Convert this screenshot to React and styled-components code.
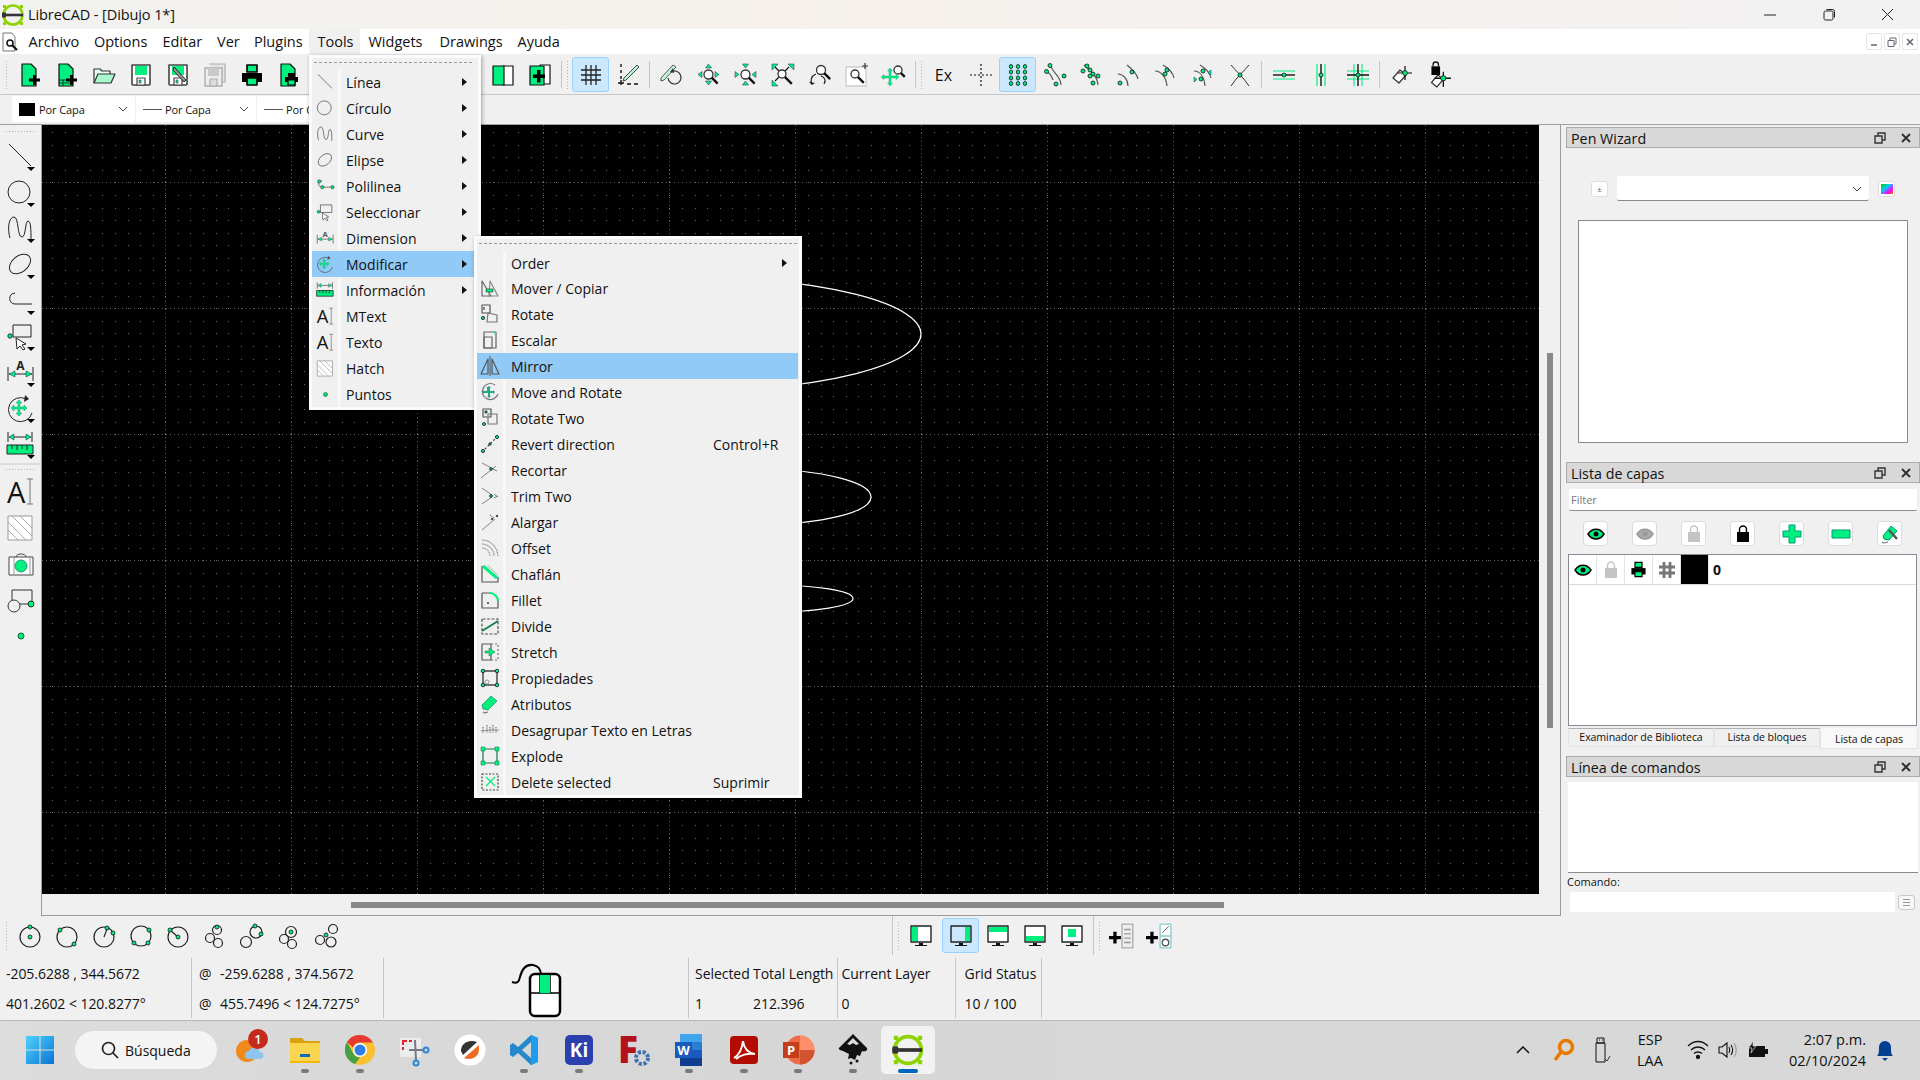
import React, { useMemo } from 'react'
import styled, { createGlobalStyle } from 'styled-components'

const G = '#00f080'
const FONT = '"Open Sans", "Noto Sans", "Liberation Sans", sans-serif'

const GlobalStyle = createGlobalStyle`
  html, body { margin: 0; padding: 0; background: #f0f0f0; }
  body { font-family: ${FONT}; font-size: 14px; color: #111; overflow: hidden; }
  * { box-sizing: border-box; }
`

const Root = styled.div`
  position: relative;
  width: 1920px;
  height: 1080px;
  overflow: hidden;
  display: flex;
  flex-direction: column;
  background: #f0f0f0;
`

/* ---------- title + menu ---------- */
const TitleBar = styled.div`
  height: 29px;
  display: flex;
  align-items: center;
  background: linear-gradient(90deg, #f2f2f0, #f6f1ec 40%, #f4f0ee 70%, #f2f2f2);
`
const TitleLogo = styled.div`
  margin-left: 1px;
  width: 24px;
  height: 24px;
`
const TitleText = styled.span`
  margin-left: 3px;
  font-size: 14.5px;
  letter-spacing: -0.1px;
`
const WinButtons = styled.div`
  margin-left: auto;
  padding-right: 4px;
  display: flex;
`
const WinButton = styled.div`
  width: 58px;
  height: 29px;
  display: flex;
  align-items: center;
  justify-content: center;
`
const MenuBar = styled.div`
  height: 26px;
  background: #fff;
  display: flex;
  align-items: center;
  border-bottom: 1px solid #f0f0f0;
`
const MenuGlyph = styled.svg`
  width: 20px;
  height: 22px;
  margin: 0 0 0 2px;
`
const MenuEntry = styled.div`
  flex: none;
  width: ${p => p.$w}px;
  height: 26px;
  padding-left: ${p => p.$pad || 8}px;
  display: flex;
  align-items: center;
  font-size: 14.5px;
  background: ${p => (p.$open ? '#f0f0f0' : 'transparent')};
`
const MdiButtons = styled.div`
  margin-left: auto;
  margin-right: 2px;
  display: flex;
  gap: 2px;
`
const MdiButton = styled.div`
  width: 16px;
  height: 17px;
  border: 1px solid #e4e4e4;
  border-radius: 2px;
  display: flex;
  align-items: center;
  justify-content: center;
`

/* ---------- toolbars ---------- */
const ToolRow = styled.div`
  height: 40px;
  display: flex;
  align-items: center;
  padding-left: 4px;
  border-bottom: 1px solid #c8c8c8;
`
const Grip = styled.div`
  flex: none;
  width: ${p => p.$w || 7}px;
  align-self: stretch;
  margin: 5px 0;
  background-image: radial-gradient(circle, #b4b4b4 0.8px, transparent 1px);
  background-size: 3px 3px;
  background-repeat: repeat-y;
  background-position: 1px 0;
`
const Sep = styled.div`
  flex: none;
  width: 7px;
  align-self: stretch;
  margin: ${p => (p.$full ? 0 : 6)}px 0;
  background: linear-gradient(#c4c4c4, #c4c4c4) 3px 0 / 1px 100% no-repeat;
`
const Spacer = styled.div`
  flex: none;
  width: ${p => p.$w}px;
`
const Tool = styled.div`
  flex: none;
  width: ${p => p.$w || 37}px;
  height: 35px;
  padding-right: ${p => p.$pr || 0}px;
  display: flex;
  align-items: center;
  justify-content: center;
  border: 1px solid ${p => (p.$on ? '#99d1ff' : 'transparent')};
  border-radius: 3px;
  background: ${p => (p.$on ? '#cce8ff' : 'transparent')};
  font-size: 16px;
`
const ComboRow = styled.div`
  height: 30px;
  display: flex;
  align-items: center;
  padding: 0 0 1px 12px;
  gap: 1px;
  border-bottom: 1px solid #a0a0a8;
`
const Combo = styled.div`
  width: ${p => p.$w}px;
  height: 26px;
  background: #fff;
  border-radius: 2px;
  display: flex;
  align-items: center;
  padding-left: 7px;
  position: relative;
  font-size: 11px;
  letter-spacing: -0.1px;
  white-space: nowrap;
`
const Swatch = styled.div`
  width: 16px;
  height: 13px;
  background: #000;
  margin-right: 4px;
`
const PenLine = styled.div`
  width: 19px;
  height: 1px;
  background: #555;
  margin-right: 3px;
`
const Chev = styled.svg`
  position: absolute;
  right: 7px;
  top: 9px;
  width: 10px;
  height: 8px;
`

/* ---------- workspace ---------- */
const Workspace = styled.div`
  flex: none;
  height: 791px;
  display: flex;
`
const SideBar = styled.div`
  flex: none;
  width: 41px;
  display: flex;
  flex-direction: column;
  align-items: stretch;
`
const SideGrip = styled.div`
  height: ${p => p.$h || 14}px;
  margin: 0 5px;
  background-image: radial-gradient(circle, #b0b0b0 0.8px, transparent 1px);
  background-size: 3px 3px;
  background-repeat: repeat-x;
  background-position: 0 ${p => p.$y || 5}px;
`
const SideTool = styled.div`
  height: 36px;
  display: flex;
  align-items: center;
  justify-content: center;
  color: #222;
`
const SideDivider = styled.div`
  height: 2px;
  background: #ddd;
`
const CanvasFrame = styled.div`
  flex: none;
  width: 1520px;
  height: 791px;
  border: 1px solid #9a9aa2;
  border-top: none;
  display: grid;
  grid-template-columns: 1497px 1fr;
  grid-template-rows: 769px 1fr;
`
const CanvasSvg = styled.svg`
  display: block;
  background: #000;
  width: 1497px;
  height: 769px;
`
const VScroll = styled.div`
  padding: 228px 0 0 8px;
`
const VThumb = styled.div`
  width: 6px;
  height: 375px;
  background: #888;
`
const HScroll = styled.div`
  grid-column: 1 / span 2;
  padding: 8px 0 0 309px;
`
const HThumb = styled.div`
  width: 873px;
  height: 6px;
  background: #888;
`

/* ---------- docks ---------- */
const Dock = styled.div`
  flex: none;
  width: 359px;
  padding: 2px 0 0 5px;
  display: flex;
  flex-direction: column;
`
const DockTitle = styled.div`
  flex: none;
  height: 21px;
  width: 354px;
  background: #d8d8d8;
  border: 1px solid #acacac;
  display: flex;
  align-items: center;
  padding: 1px 0 0 4px;
  font-size: 14.3px;
`
const DockIcons = styled.div`
  margin-left: auto;
  display: flex;
  gap: 14px;
  padding: 0 7px 1px 0;
  align-items: center;
`
const WizardBody = styled.div`
  flex: none;
  height: 314px;
  padding: 28px 0 0 25px;
`
const WizardRow = styled.div`
  display: flex;
  align-items: center;
  height: 25px;
`
const SmallBtn = styled.div`
  width: 17px;
  height: 16px;
  background: #fff;
  border: 1px solid #dcdcdc;
  border-radius: 3px;
  display: flex;
  align-items: center;
  justify-content: center;
  font-size: 8px;
  color: #666;
`
const WizardCombo = styled.div`
  position: relative;
  width: 252px;
  height: 25px;
  margin: 0 9px;
  background: #fff;
  border-bottom: 1px solid #8a8a8a;
  border-radius: 2px;
`
const WizardList = styled.div`
  width: 330px;
  height: 223px;
  margin: 19px 0 0 -13px;
  background: #fff;
  border: 1px solid #8a8a94;
`
const LayersBody = styled.div`
  flex: none;
  height: 273px;
  padding-top: 6px;
`
const FilterInput = styled.div`
  height: 22px;
  width: 348px;
  margin-left: 3px;
  background: #fff;
  border-bottom: 1px solid #8a8a8a;
  border-radius: 2px;
  padding-left: 2px;
  font-size: 11px;
  line-height: 22px;
  color: #777;
`
const LayerTools = styled.div`
  display: flex;
  gap: 24px;
  padding: 10px 0 0 17px;
`
const LayerBtn = styled.div`
  width: 25px;
  height: 25px;
  background: #fff;
  border: 1px solid #dcdcdc;
  border-radius: 4px;
  display: flex;
  align-items: center;
  justify-content: center;
`
const LayerTable = styled.div`
  width: 349px;
  height: 172px;
  margin: 8px 0 0 2px;
  background: #fff;
  border: 1px solid #8a8a94;
`
const LayerRow = styled.div`
  display: flex;
  height: 30px;
  border-bottom: 1px solid #d8d8d8;
`
const LayerCell = styled.div`
  width: 28px;
  display: flex;
  align-items: center;
  justify-content: center;
  border-right: 1px solid #e4e4e4;
  background: ${p => p.$bg || 'transparent'};
`
const LayerName = styled.div`
  padding-left: 4px;
  line-height: 29px;
  font-weight: 700;
  font-size: 14px;
`
const TabRow = styled.div`
  display: flex;
  margin: 2px 0 0 2px;
`
const TabItem = styled.div`
  width: ${p => p.$w}px;
  height: ${p => (p.$on ? 21 : 19)}px;
  background: ${p => (p.$on ? '#f8f8f8' : '#f0f0f0')};
  border: 1px solid #e4e4e4;
  border-top: ${p => (p.$on ? 'none' : '1px solid #b0b0b0')};
  font-size: 10.6px;
  letter-spacing: -0.1px;
  text-align: center;
  line-height: ${p => (p.$on ? 23 : 16)}px;
`
const CommandBody = styled.div`
  flex: none;
  padding: 5px 0 0 2px;
`
const CommandOutput = styled.div`
  width: 350px;
  height: 91px;
  background: #fff;
  border-bottom: 1px solid #8a8a8a;
`
const CommandLabel = styled.div`
  height: 18px;
  font-size: 11px;
  line-height: 18px;
  margin-left: -1px;
`
const CommandRow = styled.div`
  display: flex;
  align-items: center;
  padding: 1px 0 0 2px;
`
const CommandInput = styled.div`
  width: 325px;
  height: 20px;
  background: #fff;
`
const CommandBtn = styled.div`
  width: 17px;
  height: 15px;
  margin-left: 3px;
  border: 1px solid #c8c8c8;
  border-radius: 3px;
  background: #f8f8f8;
  display: flex;
  align-items: center;
  justify-content: center;
`

/* ---------- bottom bars ---------- */
const BottomTools = styled.div`
  flex: none;
  height: 39px;
  padding-left: 4px;
  display: flex;
  align-items: center;
`
const StatusBar = styled.div`
  flex: none;
  height: 65px;
  display: flex;
  padding-top: 3px;
  font-size: 14px;
  letter-spacing: -0.05px;
`
const StatusField = styled.div`
  flex: none;
  width: ${p => p.$w}px;
  height: 60px;
  padding-left: ${p => p.$pad || 0}px;
  border-right: 1px solid #c6c6c6;
  display: grid;
  grid-template-columns: ${p => p.$cols || '1fr'};
  grid-auto-rows: 30px;
  align-items: center;
  white-space: nowrap;
`
const MouseCell = styled.div`
  width: 305px;
  height: 60px;
  border-right: 1px solid #c6c6c6;
  display: flex;
  justify-content: center;
  padding: 2px 0 0 5px;
`
const TaskBar = styled.div`
  flex: none;
  height: 60px;
  display: flex;
  align-items: center;
  padding: 0 0 1px 18px;
  background: linear-gradient(90deg, #dcdcdc, #d6d6d6 40%, #d8d8d8);
  border-top: 1px solid #b8b8b8;
`
const WinStart = styled.div`
  width: 44px;
  display: flex;
  justify-content: center;
`
const SearchPill = styled.div`
  width: 142px;
  height: 38px;
  margin: 0 6px 0 13px;
  background: #f4f4f4;
  border-radius: 19px;
  display: flex;
  align-items: center;
  padding-left: 26px;
  gap: 6px;
  font-size: 14px;
`
const AppSlot = styled.div`
  position: relative;
  width: 54.8px;
  height: 48px;
  display: flex;
  align-items: center;
  justify-content: center;
  border-radius: 5px;
  background: ${p => (p.$active ? '#f2f2f2' : 'transparent')};
  &::after {
    content: ${p => (p.$open ? '""' : 'none')};
    position: absolute;
    left: 50%;
    bottom: 1px;
    transform: translateX(-50%);
    width: ${p => (p.$active ? 20 : 8)}px;
    height: 4px;
    border-radius: 2px;
    background: ${p => (p.$active ? '#0067c0' : '#7a7a7a')};
  }
`
const Badge = styled.div`
  position: absolute;
  top: 3px;
  left: 25px;
  width: 20px;
  height: 20px;
  border-radius: 50%;
  background: #c42b1c;
  color: #fff;
  font-size: 13px;
  font-weight: 600;
  line-height: 20px;
  text-align: center;
`
const Tray = styled.div`
  margin-left: auto;
  padding-right: 16px;
  display: flex;
  align-items: center;
`
const TrayItem = styled.div`
  width: ${p => p.$w}px;
  display: flex;
  flex-direction: column;
  align-items: ${p => p.$align || 'center'};
  justify-content: center;
  font-size: 14.5px;
  line-height: 21px;
  white-space: nowrap;
`

/* ---------- popup menus ---------- */
const Popup = styled.div`
  position: absolute;
  left: ${p => p.$x}px;
  top: ${p => p.$y}px;
  width: ${p => p.$w}px;
  background: #f0f0f0;
  border: 3px solid #fbfbfb;
  padding-right: ${p => p.$pr}px;
  box-shadow: 1px 1px 4px rgba(0, 0, 0, 0.35);
`
const TearOff = styled.div`
  height: ${p => p.$h}px;
  margin-left: 2px;
  background: repeating-linear-gradient(90deg, #9a9a9a 0 3px, transparent 3px 5px) 0 4px / 100% 1px no-repeat;
`
const PopupRow = styled.div`
  display: flex;
  align-items: center;
  height: ${p => p.$h || 26}px;
  background: ${p => (p.$active ? '#91c9f7' : 'transparent')};
  font-size: 14px;
  letter-spacing: 0.02px;
`
const PopupIcon = styled.div`
  flex: none;
  width: ${p => p.$w}px;
  height: 100%;
  display: flex;
  align-items: center;
  justify-content: center;
  color: #555;
  border-right: 3px solid ${p => (p.$active ? 'transparent' : '#f8f8f8')};
`
const PopupLabel = styled.div`
  padding-left: 5px;
  flex: 1;
`
const Shortcut = styled.div`
  width: 85px;
`
const SubArrow = styled.div`
  width: 0;
  height: 0;
  margin-right: ${p => p.$mr}px;
  border-left: 5px solid #111;
  border-top: 4px solid transparent;
  border-bottom: 4px solid transparent;
`

/* ---------- icons ---------- */
const Ic = ({ s = 24, children, vb, w = 1.2 }) => (
  <svg width={s} height={s} viewBox={vb || '0 0 24 24'} fill="none" stroke="#111" strokeWidth={w} strokeLinejoin="round" overflow="visible">
    {children}
  </svg>
)

const plus = <path d="M15 12h3v3.5h4v3h-4V22h-3v-3.5h-4v-3h4z" fill="#000" stroke="none" />
const floppy = (fill) => (
  <>
    <path d="M3 2h18v19a1 1 0 0 1-1 1H4a1 1 0 0 1-1-1z" fill="#fff" stroke="#444" strokeWidth="1.6" />
    <path d="M6 3h12v9H6z" fill={fill} stroke="none" />
    <path d="M8 15h8v7H8z" fill="#fff" stroke="#444" />
    <path d="M10 17h2v3h-2z" fill={fill} stroke="#444" strokeWidth=".6" />
  </>
)
const magnifier = (cx, cy, r = 4.5, hx = 6) => (
  <>
    <circle cx={cx} cy={cy} r={r} fill="#fff" stroke="#333" strokeWidth="1.3" />
    <path d={`M${cx + r * 0.7} ${cy + r * 0.7}l${hx} ${hx}`} stroke="#111" strokeWidth="2.4" />
  </>
)
const tri = (d) => <path d={d} fill={G} stroke="#226" strokeWidth=".5" />
const node = (x, y, r = 2) => <circle cx={x} cy={y} r={r} fill={G} stroke="#111" strokeWidth=".8" />

const I = {
  fileNew: (
    <>
      <path d="M4 1h9l5 5v17H4z" fill={G} stroke="#111" />
      {plus}
    </>
  ),
  fileTpl: (
    <>
      <path d="M4 1h9l5 5v17H4z" fill={G} stroke="#111" />
      <path d="M4 17h11M4 20h11M8 17v6" stroke="#111" strokeWidth=".8" />
      {plus}
    </>
  ),
  open: (
    <>
      <path d="M2 20V6h6l2 2h8v3" fill="#e8fff2" stroke="#333" />
      <path d="M2 20l4-9h17l-4 9z" fill="#a8f8cc" stroke="#333" />
    </>
  ),
  save: floppy(G),
  saveAs: (
    <>
      {floppy(G)}
      <path d="M8 4l12 13-2 2L7 7z" fill="#999" stroke="#111" strokeWidth=".9" />
    </>
  ),
  saveAll: (
    <g opacity=".55">
      <path d="M6 1h16v18h-3" fill="#ddd" stroke="#777" />
      <path d="M2 5h17v18H2z" fill="#eee" stroke="#777" strokeWidth="1.4" />
      <path d="M5 5h11v8H5z" fill="#aaa" stroke="none" />
      <path d="M7 16h7v7H7z" fill="#ccc" stroke="#777" />
    </g>
  ),
  print: (
    <>
      <path d="M7 2h10v7H7z" fill={G} stroke="#000" strokeWidth="1.6" />
      <path d="M2 10h20v9H2z" fill="#000" stroke="none" />
      <path d="M7 15h10v7H7z" fill={G} stroke="#000" strokeWidth="1.6" />
    </>
  ),
  preview: (
    <>
      <path d="M4 1h9l5 5v17H4z" fill={G} stroke="#111" />
      <path d="M11 10h7v4h-7zM8 14h13v5H8z" fill="#000" stroke="none" />
      <path d="M11 17h7v5h-7z" fill={G} stroke="#000" />
    </>
  ),
  doc2: (
    <>
      <path d="M12 3h10v19H12z" fill="#fff" stroke="#111" />
      <path d="M2 3h11v19H2z" fill={G} stroke="#111" />
    </>
  ),
  doc2Plus: (
    <>
      <path d="M12 2h10v19H12z" fill="#fff" stroke="#111" />
      <path d="M2 3h14v19H2z" fill={G} stroke="#111" />
      <path d="M8 8h3.5v4.5H16V16h-4.5v4.5H8V16H4v-3.5h4z" fill="#000" stroke="none" transform="translate(1 -1)" />
    </>
  ),
  grid: <path d="M2 7h20M2 12h20M2 17h20M7 2v20M12 2v20M17 2v20" stroke="#222" strokeWidth="1.3" />,
  draft: (
    <>
      <path d="M5 1v3M5 7v3M5 13v3" stroke="#111" strokeWidth="1.4" />
      <path d="M5 17v5M2 20h6M11 21h4M18 21h4" stroke="#111" strokeWidth="1.4" />
      <path d="M8 15L21 2l2 2-13 13-3 1z" fill="#b8f8d4" stroke="#333" strokeWidth=".9" />
    </>
  ),
  redraw: (
    <>
      <path d="M1 15L13 2l3 2L4 17l-3 1z" fill="#c4f8dc" stroke="#444" strokeWidth=".9" />
      <path d="M11 9a6.5 6.5 0 1 1-3 6" stroke="#333" />
      <path d="M13 5l-3 4 4 1" fill="#333" stroke="none" />
    </>
  ),
  zoomIn: (
    <>
      {magnifier(11.5, 11.5)}
      {tri('M11.5 1l3 4h-6zM11.5 22l-3-4h6zM1 11.5l4-3v6zM22 11.5l-4 3v-6z')}
    </>
  ),
  zoomOut: (
    <>
      {magnifier(11.5, 11.5)}
      {tri('M8.5 1h6l-3 4zM8.5 22h6l-3-4zM1 8.5v6l4-3zM22 8.5v6l-4-3z')}
    </>
  ),
  zoomAuto: (
    <>
      {magnifier(11, 11, 4, 7)}
      <path d="M4 4l4 4M18 4l-4 4M4 18l4-4" stroke="#111" />
      {tri('M1 1h6l-6 6zM23 1v6l-6-6zM1 23v-6l6 6z')}
    </>
  ),
  zoomPrev: (
    <>
      {magnifier(13, 7)}
      <path d="M8 11C3 13 2 18 4 21" stroke="#222" />
      <path d="M13 13a5 5 0 0 1 3 8" stroke="#222" />
      <path d="M1 19l3 3 3-2" fill="#222" stroke="none" />
    </>
  ),
  zoomWin: (
    <>
      <path d="M1 4h20v19H1z" fill="#fff" stroke="#ccc" strokeWidth="1.3" />
      <path d="M20 0v6M17 3h6" stroke="#333" />
      {magnifier(10, 11, 4, 6)}
    </>
  ),
  zoomPan: (
    <>
      {magnifier(16, 7, 4, 4)}
      <path d="M8 5l2.5 3H9v5h5v-1.5l3 2.5-3 2.5V15H9v5h1.5L8 23l-2.5-3H7v-5H2v1.5L-1 14l3-2.5V13h5V8H5.5z" fill={G} stroke="#297" strokeWidth=".4" />
    </>
  ),
  cross: <path d="M1 12h2M5 12h2M9 12h2M13 12h2M17 12h2M21 12h2M12 1v2M12 5v2M12 9v2M12 13v2M12 17v2M12 21v2" stroke="#111" />,
  dots: (
    <>
      {[5, 12, 19].flatMap(x => [3.5, 9, 15, 20.5].map(y => <ellipse key={`${x}${y}`} cx={x} cy={y} rx="1.7" ry="2" fill={G} stroke="#111" strokeWidth=".8" />))}
    </>
  ),
  snapEnd: (
    <>
      <path d="M8 3c1 6 10 10 10 19" stroke="#555" />
      <path d="M3 8c4 2 6 6 7 9" stroke="#555" />
      {node(7, 2.5)}{node(3.5, 8.5)}{node(21, 13)}{node(13, 21)}
    </>
  ),
  snapOn: (
    <>
      <path d="M4 2c5 4 13 10 14 20" stroke="#555" />
      {node(7, 3)}{node(3, 8)}{node(10, 7)}{node(13, 11)}{node(10, 13)}{node(18, 13)}{node(13, 20)}
    </>
  ),
  snapCenter: (
    <>
      <path d="M10 2c5 4 10 9 11 14M1 11c5 0 10 5 10 12" stroke="#555" />
      {node(15, 9)}{node(3, 20)}
    </>
  ),
  snapMid: (
    <>
      <path d="M9 2c5 3 10 8 11 13M1 8c6 0 11 6 12 15" stroke="#555" />
      {node(13, 7)}{node(11, 11)}
    </>
  ),
  snapDist: (
    <>
      <path d="M9 2c5 3 10 8 11 13M3 8c6 0 10 6 11 15" stroke="#555" />
      {node(12, 8)}{node(10, 16)}
      {tri('M20 7v5l-3-2.5zM3 14v5l3-2.5z')}
    </>
  ),
  snapInt: (
    <>
      <path d="M3 2c5 6 13 13 18 21M21 2C16 8 8 15 3 23" stroke="#333" strokeWidth="1" />
      {node(12, 12)}
    </>
  ),
  restH: (
    <>
      <path d="M1 8h22M1 16h22" stroke={G} strokeWidth="1.2" />
      <path d="M1 12h22" stroke="#111" strokeWidth="1.4" />
      {node(12, 12, 2)}
    </>
  ),
  restV: (
    <>
      <path d="M8 1v22M16 1v22" stroke={G} strokeWidth="1.2" />
      <path d="M12 1v22" stroke="#111" strokeWidth="1.4" />
      {node(12, 12, 2)}
    </>
  ),
  restO: (
    <>
      <path d="M1 8h22M1 16h22M8 1v22M16 1v22" stroke={G} strokeWidth="1.1" />
      <path d="M1 12h22M12 1v22" stroke="#111" strokeWidth="1.4" />
      {node(12, 12, 2)}
    </>
  ),
  relZero: (
    <>
      <path d="M3 15l7-8 6 5-7 8z" fill="#fff" stroke="#333" />
      <path d="M8 10h14M15 3v14" stroke="#111" />
      {node(15, 10, 2.4)}
    </>
  ),
  lockZero: (
    <>
      <path d="M5 4h8v8H5z" fill="#000" stroke="none" />
      <path d="M6.500 4V2.500a2.500 2.500 0 0 1 5 0V4" stroke="#111" />
      <path d="M5 19l6-7 5 4-6 7z" fill="#fff" stroke="#333" />
      <path d="M8 15h15M16 9v14" stroke="#111" />
      {node(16, 15, 2.4)}
    </>
  ),
  circCR: (<><circle cx="12" cy="13" r="10" stroke="#222" />{node(12, 13)}{node(12, 3)}</>),
  circ2P: (<><circle cx="12" cy="13" r="10" stroke="#222" />{node(5, 6)}{node(19, 20)}</>),
  circSeg: (<><circle cx="12" cy="13" r="10" stroke="#222" /><path d="M12 13l3-8" stroke="#222" />{node(15, 4)}{node(21, 9)}</>),
  circ3P: (<><circle cx="12" cy="12" r="10" stroke="#222" />{node(20, 6)}{node(5, 19)}{node(19, 19)}</>),
  circR: (<><circle cx="12" cy="13" r="10" stroke="#222" /><path d="M4 6l8 7" stroke="#222" />{node(4, 6)}{node(12, 13)}</>),
  circ3T: (<><circle cx="14" cy="6" r="4.5" stroke="#222" /><circle cx="7" cy="14" r="4.5" stroke="#222" /><circle cx="15" cy="19" r="4.5" stroke="#222" />{node(14, 3)}</>),
  circ2T: (<><circle cx="6" cy="18" r="5.5" stroke="#222" /><circle cx="16" cy="8" r="6" stroke="#222" />{node(15, 2)}{node(21, 10)}</>),
  circ3I: (<><circle cx="14" cy="8" r="5.5" stroke="#222" /><circle cx="7" cy="15" r="4.5" stroke="#222" /><circle cx="15" cy="20" r="4.5" stroke="#222" />{node(14, 8)}</>),
  circ3C: (<><circle cx="19" cy="5" r="4.5" stroke="#222" /><circle cx="6" cy="16" r="4.5" stroke="#222" /><circle cx="17" cy="18" r="5" stroke="#222" />{node(12, 11)}</>),
  scrL: (<><path d="M2 2h20v16H2z" fill="#fff" stroke="#222" strokeWidth="1.4" /><path d="M3 3h6v14H3z" fill={G} stroke="none" /><path d="M10 19h4v2h4v1H6v-1h4z" fill="#111" stroke="none" /></>),
  scrR: (<><path d="M2 2h20v16H2z" fill="#cce8ff" stroke="#222" strokeWidth="1.4" /><path d="M16 3h5v14h-5z" fill={G} stroke="none" /><path d="M10 19h4v2h4v1H6v-1h4z" fill="#111" stroke="none" /></>),
  scrT: (<><path d="M2 2h20v16H2z" fill="#fff" stroke="#222" strokeWidth="1.4" /><path d="M3 3h18v5H3z" fill={G} stroke="none" /><path d="M10 19h4v2h4v1H6v-1h4z" fill="#111" stroke="none" /></>),
  scrB: (<><path d="M2 2h20v16H2z" fill="#fff" stroke="#222" strokeWidth="1.4" /><path d="M3 12h18v5H3z" fill={G} stroke="none" /><path d="M10 19h4v2h4v1H6v-1h4z" fill="#111" stroke="none" /></>),
  scrC: (<><path d="M2 2h20v16H2z" fill="#fff" stroke="#222" strokeWidth="1.4" /><path d="M8 5h8v8H8z" fill={G} stroke="none" /><path d="M10 19h4v2h4v1H6v-1h4z" fill="#111" stroke="none" /></>),
  addList: (<><path d="M12 1h10v22H12z" fill="#eee" stroke="#aaa" /><path d="M14 6h6M14 10h6M14 14h6M14 18h6" stroke="#999" /><path d="M4 8h3v4h4v3H7v4H4v-4H0v-3h4z" fill="#000" stroke="none" /></>),
  addBlock: (<><path d="M13 1h10v11H13zM13 12h10v11H13z" fill="#fff" stroke="#8cc" /><path d="M15 9l6-6" stroke="#555" strokeWidth=".8" /><circle cx="18" cy="18" r="3" stroke="#555" /><path d="M4 8h3v4h4v3H7v4H4v-4H0v-3h4z" fill="#000" stroke="none" /></>),
}

/* side toolbar shapes, also used at small size in the menu */
const Corner = <path d="M21 25h8l-4 4z" fill="#000" stroke="none" />
const side = {
  line: (c) => (<><path d="M3 2l22 22" stroke="currentColor" />{c}</>),
  circle: (c) => (<><circle cx="13" cy="14" r="11" stroke="currentColor" />{c}</>),
  spline: (c) => (<><path d="M4 24C1 14 3 3 8 3c5 0 3 20 8 20 4 0 3-16 6-16 3 0 3 10 3 18" stroke="currentColor" />{c}</>),
  ellipse: (c) => (<><ellipse cx="14" cy="14" rx="12" ry="8" transform="rotate(-40 14 14)" stroke="currentColor" />{c}</>),
  poly: (c) => (<><path d="M9 7C2 7 2 18 9 18h17" stroke="currentColor" />{c}</>),
  select: (c) => (<><path d="M7 3h18v12H7z" fill="#f0f0f0" stroke="currentColor" /><path d="M10 16l10 6-4 1 3 4-2 1-3-4-3 3z" fill="#fff" stroke="currentColor" />{node(4, 14, 2.2)}{c}</>),
  dim: (c) => (
    <>
      <path d="M2 9v14M27 9v14" stroke="currentColor" />
      <path d="M3 16h23" stroke="currentColor" />
      {tri('M3 16l6-3v6zM26 16l-6-3v6z')}
      <text x="14.5" y="12" textAnchor="middle" fontSize="12" fontWeight="700" fontFamily={FONT} fill="currentColor" stroke="none">A</text>
      {c}
    </>
  ),
  modify: (c) => (
    <>
      <path d="M20 5a12 12 0 1 0 6 14" stroke="currentColor" />
      <path d="M19 1l4 4-5 3" fill="currentColor" stroke="none" />
      <path d="M13 6l3 3h-2v4h4v-2l3 3-3 3v-2h-4v4h2l-3 3-3-3h2v-4H8v2l-3-3 3-3v2h4V9h-2z" fill={G} stroke="#297" strokeWidth=".5" />
      {c}
    </>
  ),
  info: (c) => (
    <>
      <path d="M2 2v10M26 2v10M3 7h22" stroke="currentColor" />
      {tri('M3 7l5-3v6zM25 7l-5-3v6z')}
      <path d="M1 15h26v9H1z" fill={G} stroke="#222" />
      <path d="M6 15v4M11 15v5M16 15v4M21 15v5" stroke="#222" />
      {c}
    </>
  ),
  mtext: (c) => (
    <>
      <text x="1" y="26" fontSize="29" fontFamily={FONT} fill="#111" stroke="none">A</text>
      <path d="M21 2h6M24 2v25M21 27h6" stroke="#777" />
      {c}
    </>
  ),
  hatch: () => (<><path d="M2 3h24v24H2z" fill="#fff" stroke="#999" /><path d="M2 9l18 18M2 17l10 10M6 3l20 20M14 3l12 12" stroke="#aaa" /></>),
  image: () => (<><path d="M3 8h24v18H3z" fill="#fff" stroke="#444" /><path d="M10 8c0-4 10-4 10 0" stroke="#444" /><path d="M8 8v18M24 8v18" stroke="#999" /><circle cx="15" cy="17" r="6" fill={G} stroke="#297" /></>),
  block: () => (<><path d="M6 5h20v14H6z" stroke="#333" fill="#f0f0f0" /><circle cx="8" cy="21" r="6" fill="#f0f0f0" stroke="#333" />{node(25, 19, 3)}</>),
  point: () => <circle cx="15" cy="15" r="3" fill={G} stroke="#063" />,
}

const sub = {
  move: <><path d="M2 3l9 15H2z" stroke="#666" /><path d="M10 3l8 15H9z" stroke="#888" /><path d="M6 11h7v3H6z" fill={G} stroke="#333" strokeWidth=".6" /></>,
  rotate: <><path d="M2 1h8v8H2z" stroke="#555" /><path d="M8 9l9 2v7H7z" stroke="#777" />{node(3, 14, 1.6)}<path d="M4 3v3" stroke="#444" /></>,
  scale: <><path d="M4 2h12v16H4z" stroke="#666" /><path d="M4 7h8v11H4z" stroke="#666" /><path d="M13 2h3v3z" fill={G} stroke="none" /></>,
  mirror: <><path d="M10 0v20" stroke="#666" /><path d="M8 3L1 18h7zM12 3l7 15h-7z" stroke="#555" /></>,
  moveRot: <><path d="M15 3a8 8 0 1 0 3 9" stroke="#777" /><path d="M9 4l2 2H10v3h3V8l2 2-2 2v-1h-3v3h1l-2 2-2-2h1v-3H4v1l-2-2 2-2v1h3V6H6z" fill="#2a8" stroke="none" /></>,
  rot2: <><path d="M3 1h8v8H3z" stroke="#555" /><path d="M8 6h9v10H8z" stroke="#777" />{node(4, 16, 1.5)}{node(6, 4, 1.2)}</>,
  revert: <><path d="M2 18L18 2" stroke="#444" strokeDasharray="2 2" />{node(3, 17, 1.6)}{node(17, 3, 1.6)}{node(10, 10, 1.2)}</>,
  trim: <><path d="M2 3l15 8M1 18L16 6" stroke="#666" strokeWidth=".8" />{node(11, 9, 1.3)}</>,
  trim2: <><path d="M2 2l10 7M2 18l10-7M14 8l4 3M14 12l4-2" stroke="#666" strokeWidth=".8" />{node(11, 10, 1.4)}</>,
  extend: <><path d="M2 18L15 7" stroke="#666" strokeWidth=".8" /><path d="M10 3l4 3" stroke="#666" strokeDasharray="1 1" />{node(17, 4, .8)}{node(12, 7, .8)}</>,
  offset: <><path d="M2 2c8 0 15 6 16 16M2 6c6 0 12 5 12 12M2 10c4 0 8 3 8 8" stroke="#999" strokeDasharray="2 .6" /></>,
  bevel: <><path d="M2 2v16h16v-5" stroke="#555" /><path d="M3 2l14 12" stroke={G} strokeWidth="3" /><path d="M8 2l10 9" stroke="#999" strokeDasharray="1 1" /></>,
  fillet: <><path d="M2 3h9M2 3v15h16v-7" stroke="#555" /><path d="M10 3c4 0 8 4 8 8" stroke={G} strokeWidth="2.2" />{node(8, 13, .6)}</>,
  divide: <><path d="M2 3v15h16V3z" stroke="#555" strokeDasharray="3 1.5" /><path d="M2 15L18 5" stroke="#174" strokeWidth="1.6" /></>,
  stretch: <><path d="M2 2h9v16H2z" stroke="#555" /><path d="M11 2h7v16h-7" stroke="#777" strokeDasharray="2 2" /><path d="M5 9h4V6l6 4-6 4v-3H5z" fill={G} stroke="#174" strokeWidth=".5" /></>,
  props: <><path d="M3 3h14v14H3z" stroke="#444" strokeWidth="1.4" /><circle cx="7" cy="14" r="2" stroke="#777" strokeWidth=".7" />{node(3, 3, 1.8)}{node(17, 3, 1.8)}{node(3, 17, 1.8)}{node(17, 17, 1.8)}</>,
  attr: <><path d="M2 11l9-9 6 5-9 9-5-1z" fill={G} stroke="#175" strokeWidth=".6" /><path d="M3 18c3 2 4 0 5 0" stroke="#777" /></>,
  ungroup: <><path d="M1 11c3-1 6 0 9-1s6 1 9 0" stroke="#555" strokeWidth=".6" /><path d="M3 7v6M7 5v8M10 7v6M13 5v8M16 7v6" stroke="#666" strokeWidth="1.1" strokeDasharray="1 .6" /></>,
  explode: <><path d="M3 3h14v14H3" stroke="#174" /><path d="M3 3v14" stroke="#174" /><path d="M1 1h4v4H1zM15 1h4v4h-4zM1 15h4v4H1zM15 15h4v4h-4z" fill={G} stroke="#174" strokeWidth=".5" /></>,
  del: <><path d="M2 2h16v16H2z" stroke="#444" strokeDasharray="2 1.5" /><path d="M6 5l9 9M15 5l-9 9" stroke={G} strokeWidth="1.3" /></>,
}

const MENU_ITEMS = [
  ['Línea', 'line'], ['Círculo', 'circle'], ['Curve', 'spline'], ['Elipse', 'ellipse'], ['Polilinea', 'polyMenu'],
  ['Seleccionar', 'select'], ['Dimension', 'dim'], ['Modificar', 'modify', true], ['Información', 'info'],
  ['MText', 'mtext'], ['Texto', 'mtext'], ['Hatch', 'hatch'], ['Puntos', 'point'],
]
const NO_ARROW = ['MText', 'Texto', 'Hatch', 'Puntos']

const SUB_ITEMS = [
  ['Mover / Copiar', 'move'], ['Rotate', 'rotate'], ['Escalar', 'scale'], ['Mirror', 'mirror', null, true],
  ['Move and Rotate', 'moveRot'], ['Rotate Two', 'rot2'], ['Revert direction', 'revert', 'Control+R'],
  ['Recortar', 'trim'], ['Trim Two', 'trim2'], ['Alargar', 'extend'], ['Offset', 'offset'], ['Chaflán', 'bevel'],
  ['Fillet', 'fillet'], ['Divide', 'divide'], ['Stretch', 'stretch'], ['Propiedades', 'props'], ['Atributos', 'attr'],
  ['Desagrupar Texto en Letras', 'ungroup'], ['Explode', 'explode'], ['Delete selected', 'del', 'Suprimir'],
]

const ROW1A = ['fileNew', 'fileTpl', 'open', 'save', 'saveAs', 'saveAll', 'print', 'preview']
const ROW1C = ['redraw', 'zoomIn', 'zoomOut', 'zoomAuto', 'zoomPrev', 'zoomWin', 'zoomPan']
const ROW1D = ['cross', 'dots', 'snapEnd', 'snapOn', 'snapCenter', 'snapMid', 'snapDist', 'snapInt']
const CIRCLES = ['circCR', 'circ2P', 'circSeg', 'circ3P', 'circR', 'circ3T', 'circ2T', 'circ3I', 'circ3C']

const Logo = ({ s = 24, dark = '#333' }) => (
  <svg width={s} height={s} viewBox="0 0 24 24">
    <circle cx="12" cy="12" r="9.5" fill="none" stroke="#8fd400" strokeWidth="2.6" />
    <path d="M1 12h21" stroke={dark} strokeWidth="2.6" />
    <path d="M1 9.5h4v5H1z" fill={dark} />
    <path d="M2 2h3v3H2zM19 2h3v3h-3zM2 19h3v3H2zM19 19h3v3h-3z" fill="#8fd400" />
  </svg>
)
const Restore = () => (
  <svg width="12" height="12" viewBox="0 0 12 12" fill="none" stroke="#333" strokeWidth="1.4">
    <path d="M1 4h7v7H1zM4 4V1h7v7H8" />
  </svg>
)
const Close = () => (
  <svg width="12" height="12" viewBox="0 0 12 12" fill="none" stroke="#333" strokeWidth="2">
    <path d="M2 2l8 8M10 2l-8 8" />
  </svg>
)
const ChevronDown = () => (
  <Chev viewBox="0 0 10 8" fill="none" stroke="#444">
    <path d="M1 2l4 4 4-4" />
  </Chev>
)

const Eye = ({ c = G, dark = '#000' }) => (
  <svg width="18" height="12" viewBox="0 0 18 12">
    <path d="M1 6c4-6.500 12-6.500 16 0-4 6.500-12 6.500-16 0z" fill={c} stroke={dark} strokeWidth="1.5" />
    <circle cx="9" cy="6" r="2.500" fill={dark} />
  </svg>
)
const Lock = ({ c = '#000' }) => (
  <svg width="14" height="17" viewBox="0 0 14 17">
    <path d="M3.500 7V4.500a3.500 3.500 0 0 1 7 0V7" fill="none" stroke={c} strokeWidth="1.4" />
    <path d="M1 7h12v10H1z" fill={c} />
  </svg>
)

/* canvas drawing: dotted grid and the three arcs of the ellipses */
const W = 1497
const H = 769
const CanvasView = () => {
  const { dots, vs, hs } = useMemo(() => {
    let d = ''
    const x0 = 123.3 % 12.6
    const y0 = 57.3 % 12.6
    for (let x = x0; x < W; x += 12.6) {
      for (let y = y0; y < H; y += 12.6) d += `M${Math.round(x)} ${Math.round(y)}h1v1h-1z`
    }
    const vs = []
    const hs = []
    for (let x = 123.3 - 126; x < W; x += 126) if (x > 0) vs.push(Math.round(x) + 0.5)
    for (let y = 57.3; y < H; y += 126) hs.push(Math.round(y) + 0.5)
    return { dots: d, vs, hs }
  }, [])
  return (
    <CanvasSvg viewBox={`0 0 ${W} ${H}`}>
      <path d={dots} fill="#6a6a6a" shapeRendering="crispEdges" />
      {vs.map(x => <line key={x} x1={x} x2={x} y1="0" y2={H} stroke="#5c5c5c" strokeDasharray="1 3" />)}
      {hs.map(y => <line key={y} y1={y} y2={y} x1="0" x2={W} stroke="#5c5c5c" strokeDasharray="1 3" />)}
      <g fill="none" stroke="#fff" strokeWidth="1.2">
        <ellipse cx="658" cy="209" rx="221" ry="56" />
        <ellipse cx="718" cy="372" rx="111" ry="27.500" />
        <ellipse cx="728" cy="473.500" rx="83" ry="13.500" />
      </g>
    </CanvasSvg>
  )
}

/* taskbar app icons */
const App = {
  weather: (
    <svg width="30" height="30" viewBox="0 0 30 30">
      <circle cx="12" cy="16" r="11" fill="#f08a1d" />
      <path d="M14 24a4 4 0 0 1 0-8 6 6 0 0 1 11 1 3.500 3.500 0 0 1 0 7z" fill="#8fc4ef" />
    </svg>
  ),
  folder: (
    <svg width="32" height="30" viewBox="0 0 32 30">
      <path d="M1 3h12l3 3h15v22H1z" fill="#d9a20f" />
      <path d="M1 8h30v20H1z" fill="#fbd54e" />
      <path d="M11 19h10v3H11z" fill="#0f6cbd" />
      <path d="M1 26h30v2H1z" fill="#f0b90a" />
    </svg>
  ),
  chrome: (
    <svg width="30" height="30" viewBox="0 0 30 30">
      <circle cx="15" cy="15" r="15" fill="#fbc02d" />
      <path d="M15 0a15 15 0 0 1 13 7.500H15a7.500 7.500 0 0 0-7 5L2 7a15 15 0 0 1 13-7z" fill="#e53935" />
      <path d="M2 7l6 11a7.500 7.500 0 0 0 7 4.500L10 29A15 15 0 0 1 2 7z" fill="#43a047" />
      <circle cx="15" cy="15" r="7" fill="#fff" />
      <circle cx="15" cy="15" r="5.500" fill="#2e7de9" />
    </svg>
  ),
  snip: (
    <svg width="30" height="34" viewBox="0 0 30 34" fill="none">
      <path d="M0 5h21v19H0z" fill="#ececec" />
      <path d="M3 12V8h4M9 8h3M3 14v3" stroke="#d23" strokeWidth="2" />
      <path d="M15 7l1 20M24 17H9" stroke="#778" strokeWidth="2" />
      <circle cx="26" cy="17" r="2.500" stroke="#2b88d8" strokeWidth="2" />
      <circle cx="16" cy="30" r="2.500" stroke="#2b88d8" strokeWidth="2" />
    </svg>
  ),
  sketch: (
    <svg width="32" height="32" viewBox="0 0 32 32">
      <circle cx="16" cy="16" r="15.500" fill="#fff" />
      <path d="M7 17C7 9 15 5 23 8L9 21z" fill="#333" />
      <path d="M25 15c0 8-8 12-15 9l15-13z" fill="#ee6c21" />
    </svg>
  ),
  vscode: (
    <svg width="30" height="32" viewBox="0 0 30 32">
      <path d="M22 1l7 3v24l-7 3L9 19l-5 4-3-2v-10l3-2 5 4z" fill="#2489ca" />
      <path d="M22 8l-9 8 9 8z" fill="#d6d6d6" />
      <path d="M22 1l7 3v24l-7 3z" fill="#1f9cf0" />
    </svg>
  ),
  word: (
    <svg width="30" height="34" viewBox="0 0 30 34" overflow="visible">
      <path d="M6 1h22v8H6z" fill="#41a5ee" />
      <path d="M6 9h22v8H6z" fill="#2b7cd3" />
      <path d="M6 17h22v8H6z" fill="#185abd" />
      <path d="M6 25h22v8H6z" fill="#103f91" />
      <path d="M1 9h17v16H1z" fill="#185abd" />
      <text x="9.500" y="22" textAnchor="middle" fontSize="13" fontWeight="700" fontFamily={FONT} fill="#fff">W</text>
    </svg>
  ),
  acrobat: (
    <svg width="30" height="34" viewBox="0 0 30 34">
      <rect x="1" y="3" width="28" height="28" rx="4" fill="#b30b00" />
      <path d="M5 25c5-3 8-9 9-17 1 8 5 12 12 13-7-1-15 1-19 5" fill="none" stroke="#fff" strokeWidth="2" />
    </svg>
  ),
  ppt: (
    <svg width="32" height="34" viewBox="0 0 32 34" overflow="visible">
      <circle cx="18" cy="17" r="14.500" fill="#ed6c47" />
      <path d="M18 2.500a14.500 14.500 0 0 1 14.500 14.500H18z" fill="#ff8f6b" />
      <path d="M18 17h14.500A14.500 14.500 0 0 1 18 31.500z" fill="#d35230" />
      <path d="M1 9h16v16H1z" fill="#c43e1c" />
      <text x="9" y="22" textAnchor="middle" fontSize="13" fontWeight="700" fontFamily={FONT} fill="#fff">P</text>
    </svg>
  ),
  inkscape: (
    <svg width="30" height="34" viewBox="0 0 30 34">
      <path d="M15 1L29 15c1 3-3 4-5 3l-2 5-3-1-2 5-4-2-3 1 1-5-6-3C0 17 0 15 2 14z" fill="#111" />
      <path d="M15 5l6 6-3 1-3-2-3 2-3-1z" fill="#ddd" />
      <circle cx="13" cy="30" r="1.500" fill="#111" />
      <circle cx="19" cy="28" r="1.500" fill="#111" />
    </svg>
  ),
}

const LayerIcons = [
  <Eye key="a" />,
  <Eye key="b" c="#aaa" dark="#999" />,
  <Lock key="c" c="#c4c4c4" />,
  <Lock key="d" />,
  <svg key="e" width="20" height="20" viewBox="0 0 20 20"><path d="M7 1h6v6h6v6h-6v6H7v-6H1V7h6z" fill={G} stroke="#097" /></svg>,
  <svg key="f" width="20" height="10" viewBox="0 0 20 10"><path d="M1 1h18v8H1z" fill={G} stroke="#097" /></svg>,
  <svg key="g" width="20" height="20" viewBox="0 0 20 20"><path d="M3 12L11 2l6 5-8 9-5-1z" fill={G} stroke="#097" /><path d="M9 6l8 9" stroke="#555" strokeWidth="2.500" /><path d="M2 18c3 2 4 0 6 0" stroke="#555" fill="none" /></svg>,
]

export default function RootApp() {
  return (
    <Root>
      <GlobalStyle />

      <TitleBar>
        <TitleLogo><Logo /></TitleLogo>
        <TitleText>LibreCAD - [Dibujo 1*]</TitleText>
        <WinButtons>
          <WinButton>
            <svg width="14" height="2" viewBox="0 0 14 2"><path d="M0 1h12" stroke="#222" /></svg>
          </WinButton>
          <WinButton>
            <svg width="13" height="13" viewBox="0 0 13 13" fill="none" stroke="#222"><rect x="1" y="3" width="9" height="9" rx="1.500" /><path d="M3.500 1.500h6a2 2 0 0 1 2 2v6" /></svg>
          </WinButton>
          <WinButton>
            <svg width="13" height="13" viewBox="0 0 13 13" fill="none" stroke="#222"><path d="M1 1l11 11M12 1L1 12" /></svg>
          </WinButton>
        </WinButtons>
      </TitleBar>

      <MenuBar>
        <MenuGlyph viewBox="0 0 20 22" fill="none">
          <path d="M1 2h9l3 4v14H1z" fill="#fff" stroke="#777" />
          <circle cx="8" cy="12" r="3" fill="#fff" stroke="#111" strokeWidth="1.500" />
          <path d="M10 14l5 5" stroke="#111" strokeWidth="2.200" />
        </MenuGlyph>
        <MenuEntry $pad={6.6} $w={63.9}>Archivo</MenuEntry>
        <MenuEntry $w={68.5}>Options</MenuEntry>
        <MenuEntry $w={54.6}>Editar</MenuEntry>
        <MenuEntry $w={37}>Ver</MenuEntry>
        <MenuEntry $w={63.5}>Plugins</MenuEntry>
        <MenuEntry $w={51} $open>Tools</MenuEntry>
        <MenuEntry $w={71}>Widgets</MenuEntry>
        <MenuEntry $w={78}>Drawings</MenuEntry>
        <MenuEntry $w={60}>Ayuda</MenuEntry>
        <MdiButtons>
          <MdiButton>
            <svg width="8" height="8" viewBox="0 0 8 8"><path d="M1 7h6" stroke="#667" strokeWidth="1.500" /></svg>
          </MdiButton>
          <MdiButton>
            <svg width="10" height="10" viewBox="0 0 10 10" fill="none" stroke="#667"><path d="M1 3.500h6v6H1zM3 3V1h6v6H7" /></svg>
          </MdiButton>
          <MdiButton>
            <svg width="8" height="8" viewBox="0 0 8 8"><path d="M1 1l6 6M7 1L1 7" stroke="#667" strokeWidth="1.600" /></svg>
          </MdiButton>
        </MdiButtons>
      </MenuBar>

      <ToolRow>
        <Grip />
        {ROW1A.map(k => <Tool key={k}><Ic>{I[k]}</Ic></Tool>)}
        <Spacer $w={177} />
        <Tool><Ic>{I.doc2}</Ic></Tool>
        <Tool><Ic>{I.doc2Plus}</Ic></Tool>
        <Sep />
        <Grip />
        <Tool $on><Ic>{I.grid}</Ic></Tool>
        <Tool><Ic>{I.draft}</Ic></Tool>
        <Sep />
        {ROW1C.map(k => <Tool key={k}><Ic>{I[k]}</Ic></Tool>)}
        <Sep />
        <Grip $w={6} />
        <Tool>Ex</Tool>
        {ROW1D.map(k => <Tool key={k} $on={k === 'dots'}><Ic>{I[k]}</Ic></Tool>)}
        <Sep />
        <Tool><Ic>{I.restH}</Ic></Tool>
        <Tool><Ic>{I.restV}</Ic></Tool>
        <Tool><Ic>{I.restO}</Ic></Tool>
        <Sep />
        <Tool><Ic>{I.relZero}</Ic></Tool>
        <Tool><Ic s={26}>{I.lockZero}</Ic></Tool>
      </ToolRow>

      <ComboRow>
        <Combo $w={123}><Swatch />Por Capa<ChevronDown /></Combo>
        <Combo $w={120}><PenLine />Por Capa<ChevronDown /></Combo>
        <Combo $w={100}><PenLine />Por Capa</Combo>
      </ComboRow>

      <Workspace>
        <SideBar>
          <SideGrip />
          {['line', 'circle', 'spline', 'ellipse', 'poly', 'select', 'dim', 'modify', 'info'].map(k => (
            <SideTool key={k}><Ic s={30} vb="0 0 30 30" w={1}>{side[k](Corner)}</Ic></SideTool>
          ))}
          <SideDivider />
          <SideGrip $y={3} $h={9} />
          {['mtext', 'hatch', 'image', 'block', 'point'].map(k => (
            <SideTool key={k}><Ic s={30} vb="0 0 30 30" w={1}>{side[k]()}</Ic></SideTool>
          ))}
        </SideBar>

        <CanvasFrame>
          <CanvasView />
          <VScroll><VThumb /></VScroll>
          <HScroll><HThumb /></HScroll>
        </CanvasFrame>

        <Dock>
          <DockTitle>Pen Wizard<DockIcons><Restore /><Close /></DockIcons></DockTitle>
          <WizardBody>
            <WizardRow>
              <SmallBtn>±</SmallBtn>
              <WizardCombo><ChevronDown /></WizardCombo>
              <SmallBtn>
                <svg width="12" height="10" viewBox="0 0 12 10">
                  <defs>
                    <linearGradient id="wheel" x1="0" x2="1" y1="0" y2="1">
                      <stop offset="0" stopColor="#0c0" /><stop offset=".4" stopColor="#0cf" /><stop offset=".7" stopColor="#f0f" /><stop offset="1" stopColor="#f60" />
                    </linearGradient>
                  </defs>
                  <rect width="12" height="10" fill="url(#wheel)" />
                </svg>
              </SmallBtn>
            </WizardRow>
            <WizardList />
          </WizardBody>

          <DockTitle>Lista de capas<DockIcons><Restore /><Close /></DockIcons></DockTitle>
          <LayersBody>
            <FilterInput>Filter</FilterInput>
            <LayerTools>
              {LayerIcons.map((icon, i) => <LayerBtn key={i}>{icon}</LayerBtn>)}
            </LayerTools>
            <LayerTable>
              <LayerRow>
                <LayerCell><Eye /></LayerCell>
                <LayerCell><Lock c="#c4c4c4" /></LayerCell>
                <LayerCell>
                  <svg width="17" height="17" viewBox="0 0 24 24">{I.print}</svg>
                </LayerCell>
                <LayerCell>
                  <svg width="18" height="18" viewBox="0 0 18 18"><path d="M6 1v16M12 1v16M1 6h16M1 12h16" stroke="#777" strokeWidth="2.800" /></svg>
                </LayerCell>
                <LayerCell $bg="#000" />
                <LayerName>0</LayerName>
              </LayerRow>
            </LayerTable>
            <TabRow>
              <TabItem $w={146}>Examinador de Biblioteca</TabItem>
              <TabItem $w={106}>Lista de bloques</TabItem>
              <TabItem $w={98} $on>Lista de capas</TabItem>
            </TabRow>
          </LayersBody>

          <DockTitle>Línea de comandos<DockIcons><Restore /><Close /></DockIcons></DockTitle>
          <CommandBody>
            <CommandOutput />
            <CommandLabel>Comando:</CommandLabel>
            <CommandRow>
              <CommandInput />
              <CommandBtn>
                <svg width="9" height="9" viewBox="0 0 9 9"><path d="M1 1.500h7M1 4.500h7M1 7.500h7" stroke="#999" /></svg>
              </CommandBtn>
            </CommandRow>
          </CommandBody>
        </Dock>
      </Workspace>

      <BottomTools>
        <Grip />
        {CIRCLES.map(k => <Tool key={k}><Ic>{I[k]}</Ic></Tool>)}
        <Spacer $w={545} />
        <Sep $full />
        <Grip $w={6} />
        <Tool $w={40} $pr={2}><Ic>{I.scrL}</Ic></Tool>
        <Tool $on><Ic>{I.scrR}</Ic></Tool>
        <Tool><Ic>{I.scrT}</Ic></Tool>
        <Tool><Ic>{I.scrB}</Ic></Tool>
        <Tool><Ic>{I.scrC}</Ic></Tool>
        <Sep $full />
        <Grip $w={6} />
        <Tool><Ic s={26}>{I.addList}</Ic></Tool>
        <Tool><Ic s={26}>{I.addBlock}</Ic></Tool>
      </BottomTools>

      <StatusBar>
        <StatusField $w={192} $pad={6}>
          <div>-205.6288 , 344.5672</div>
          <div>401.2602 &lt; 120.8277°</div>
        </StatusField>
        <StatusField $w={192} $pad={7} $cols="21px 1fr">
          <div>@</div><div>-259.6288 , 374.5672</div>
          <div>@</div><div>455.7496 &lt; 124.7275°</div>
        </StatusField>
        <MouseCell>
          <svg width="56" height="58" viewBox="0 0 56 58" fill="none" stroke="#000" strokeWidth="2">
            <path d="M1 22c5 2 7 0 8-5 2-8 6-13 13-12 5 1 7 3 8 9" />
            <rect x="19" y="14" width="30" height="42" rx="5" fill="#fff" strokeWidth="2.500" />
            <path d="M19 33h30M29 14v19M39 14v19" strokeWidth="1.500" />
            <path d="M29 15h10v18H29z" fill={G} stroke="none" />
          </svg>
        </MouseCell>
        <StatusField $w={148.500} $pad={6} $cols="58px 1fr">
          <div>Selected</div><div>Total Length</div>
          <div>1</div><div>212.396</div>
        </StatusField>
        <StatusField $w={118} $pad={4}>
          <div>Current Layer</div>
          <div>0</div>
        </StatusField>
        <StatusField $w={86} $pad={9}>
          <div>Grid Status</div>
          <div>10 / 100</div>
        </StatusField>
      </StatusBar>

      <TaskBar>
        <WinStart>
          <svg width="30" height="30" viewBox="0 0 30 30">
            <defs>
              <linearGradient id="win" x1="0" x2="1" y1="0" y2="1">
                <stop offset="0" stopColor="#4fd2fb" /><stop offset="1" stopColor="#0a74d6" />
              </linearGradient>
            </defs>
            <path d="M1 1h13.500v13.500H1zM15.500 1H29v13.500H15.500zM1 15.500h13.500V29H1zM15.500 15.500H29V29H15.500z" fill="url(#win)" />
          </svg>
        </WinStart>
        <SearchPill>
          <svg width="18" height="18" viewBox="0 0 18 18" fill="none" stroke="#222" strokeWidth="1.700">
            <circle cx="7.500" cy="7.500" r="6" /><path d="M12 12l5 5" />
          </svg>
          Búsqueda
        </SearchPill>
        <AppSlot>{App.weather}<Badge>1</Badge></AppSlot>
        <AppSlot $open>{App.folder}</AppSlot>
        <AppSlot $open>{App.chrome}</AppSlot>
        <AppSlot>{App.snip}</AppSlot>
        <AppSlot>{App.sketch}</AppSlot>
        <AppSlot $open>{App.vscode}</AppSlot>
        <AppSlot $open>
          <svg width="30" height="34" viewBox="0 0 30 34" overflow="visible">
            <rect x="1" y="2" width="28" height="30" rx="5" fill="#2b3fae" />
            <text x="15" y="24" textAnchor="middle" fontSize="19" fontWeight="700" fontFamily={FONT} fill="#fff">Ki</text>
          </svg>
        </AppSlot>
        <AppSlot>
          <svg width="34" height="36" viewBox="0 0 34 36" overflow="visible">
            <text x="1" y="31" fontSize="37" fontWeight="800" fontFamily={FONT} fill="#b3121d">F</text>
            <circle cx="25" cy="26" r="6" fill="none" stroke="#3d6fb5" strokeWidth="4" strokeDasharray="3 1.700" />
          </svg>
        </AppSlot>
        <AppSlot $open>{App.word}</AppSlot>
        <AppSlot $open>{App.acrobat}</AppSlot>
        <AppSlot $open>{App.ppt}</AppSlot>
        <AppSlot $open>{App.inkscape}</AppSlot>
        <AppSlot $open $active><Logo s={34} /></AppSlot>

        <Tray>
          <TrayItem $w={40}>
            <svg width="14" height="8" viewBox="0 0 14 8" fill="none" stroke="#111" strokeWidth="1.500"><path d="M1 7l6-6 6 6" /></svg>
          </TrayItem>
          <TrayItem $w={42}>
            <svg width="22" height="24" viewBox="0 0 22 24" fill="none" stroke="#e87a00" strokeWidth="3.500">
              <circle cx="13" cy="9" r="6.500" /><path d="M8 14l-6 8" />
            </svg>
          </TrayItem>
          <TrayItem $w={34}>
            <svg width="18" height="26" viewBox="0 0 18 26" fill="none" stroke="#111">
              <path d="M3 6h9v19H3zM4 1h7v5H4z" /><path d="M6 3h1M9 3h1" /><path d="M12 22l2 2 3-5" strokeWidth=".8" />
            </svg>
          </TrayItem>
          <TrayItem $w={62}><span>ESP</span><span>LAA</span></TrayItem>
          <TrayItem $w={34}>
            <svg width="22" height="20" viewBox="0 0 22 20" fill="none" stroke="#111" strokeWidth="1.300">
              <path d="M1 6c6-6 14-6 20 0M4 10c4-4 10-4 14 0M7 13.500c2-2 6-2 8 0" /><circle cx="11" cy="17" r="1.500" fill="#111" />
            </svg>
          </TrayItem>
          <TrayItem $w={26}>
            <svg width="20" height="20" viewBox="0 0 20 20" fill="none" stroke="#111" strokeWidth="1.100">
              <path d="M1 7h3l5-4v14l-5-4H1z" /><path d="M11 7c1 2 1 4 0 6M13 5c2 3 2 7 0 10" /><path d="M16 3c3 4 3 10 0 14" stroke="#999" />
            </svg>
          </TrayItem>
          <TrayItem $w={34}>
            <svg width="22" height="18" viewBox="0 0 22 18">
              <path d="M2 5h16v11H2z" fill="#111" /><path d="M18 8h3v5h-3z" fill="#111" /><path d="M6 0L2 7h3l-1 5 5-7H6z" fill="#111" stroke="#d8d8d8" strokeWidth=".7" />
            </svg>
          </TrayItem>
          <TrayItem $w={91} $align="flex-end"><span>2:07 p.m.</span><span>02/10/2024</span></TrayItem>
          <TrayItem $w={38}>
            <svg width="18" height="24" viewBox="0 0 18 24">
              <path d="M1 18c2-2 2-4 2-9a6 6 0 0 1 12 0c0 5 0 7 2 9z" fill="#003e92" /><path d="M6 20h6l-3 3z" fill="#003e92" />
            </svg>
          </TrayItem>
        </Tray>
      </TaskBar>

      <Popup $x={309} $y={55} $w={172} $pr={4}>
        <TearOff $h={11} />
        {MENU_ITEMS.map(([label, icon, active]) => (
          <PopupRow key={label} $active={active}>
            <PopupIcon $w={29} $active={active}>
              <Ic s={19} vb="0 0 30 30">
                {icon === 'polyMenu'
                  ? (<><path d="M10 6C2 6 2 16 10 16h16" stroke="currentColor" />{node(5, 7, 2.5)}{node(10, 16, 2.5)}{node(26, 16, 2.5)}</>)
                  : side[icon](null)}
              </Ic>
            </PopupIcon>
            <PopupLabel>{label}</PopupLabel>
            {!NO_ARROW.includes(label) && <SubArrow $mr={7} />}
          </PopupRow>
        ))}
      </Popup>

      <Popup $x={474} $y={236} $w={328} $pr={1}>
        <TearOff $h={12} />
        <PopupRow $h={24}>
          <PopupIcon $w={29} />
          <PopupLabel>Order</PopupLabel>
          <SubArrow $mr={11} />
        </PopupRow>
        {SUB_ITEMS.map(([label, icon, key, active]) => (
          <PopupRow key={label} $active={active}>
            <PopupIcon $w={29} $active={active}>
              <Ic s={20} vb="0 0 20 20">{sub[icon]}</Ic>
            </PopupIcon>
            <PopupLabel>{label}</PopupLabel>
            {key && <Shortcut>{key}</Shortcut>}
          </PopupRow>
        ))}
      </Popup>
    </Root>
  )
}
